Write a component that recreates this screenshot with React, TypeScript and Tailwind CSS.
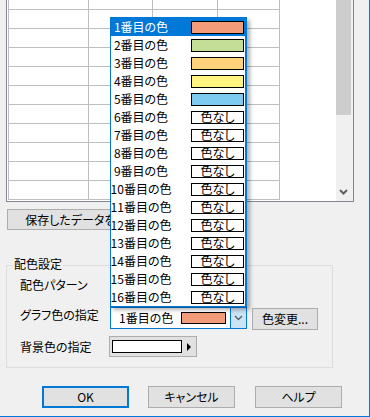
import type { ReactNode } from 'react'

const font = "font-['Noto_Sans_CJK_JP','Noto_Sans',sans-serif] [font-feature-settings:'palt']"

const swatches: (string | null)[] = [
  '#f39c79',
  '#c4dd97',
  '#fdd27b',
  '#fff47f',
  '#7ecbf1',
  null,
  null,
  null,
  null,
  null,
  null,
  null,
  null,
  null,
  null,
  null,
]

const columns = ['w-[80px]', 'w-[64px]', 'w-[65px]', 'w-[62px]']

function Chevron({ className }: { className?: string }) {
  return (
    <svg width="9" height="6" viewBox="0 0 9 6" className={className}>
      <path d="M1 1 L4.5 4.5 L8 1" fill="none" stroke="currentColor" strokeWidth="1.4" />
    </svg>
  )
}

function Swatch({ color, className }: { color: string | null; className: string }) {
  if (!color) {
    return (
      <div
        className={`${className} flex items-center justify-center whitespace-nowrap border border-black bg-white text-[12px] leading-none text-black`}
      >
        色なし
      </div>
    )
  }
  return <div className={`${className} border border-black`} style={{ backgroundColor: color }} />
}

function WinButton({ children, className }: { children: ReactNode; className: string }) {
  return (
    <div
      className={`${className} flex items-center justify-center overflow-hidden whitespace-nowrap border border-[#adadad] bg-[#e1e1e1] text-[12px] leading-none text-black`}
    >
      {children}
    </div>
  )
}

function DataGrid() {
  return (
    <div className="flex h-[202px] w-[348px] border-x border-b border-[#828790] bg-white">
      <div className="ml-[1px] h-full w-[272px] overflow-hidden">
        <div className="-mt-[9px]">
          {Array.from({ length: 11 }).map((_, row) => (
            <div key={row} className="flex h-[19px] border-b border-l border-[#bdbdbd]">
              {columns.map((w) => (
                <div key={w} className={`${w} h-full border-r border-[#bdbdbd]`} />
              ))}
            </div>
          ))}
        </div>
      </div>
      <div className="w-[56px]" />
      <div className="flex w-[17px] flex-col bg-[#f0f0f0]">
        <div className="h-[115px] w-[15px] bg-[#cdcdcd]" />
        <div className="flex flex-1 items-end justify-center pb-[6px] pr-[3px] text-[#606060]">
          <Chevron className="[&>path]:[stroke-width:2]" />
        </div>
      </div>
    </div>
  )
}

function ColorDropdown() {
  return (
    <div className="absolute left-[110px] top-[17px] w-[137px] border border-r-2 border-[#0078d7] bg-white shadow-[3px_3px_4px_rgba(0,0,0,0.3)]">
      {swatches.map((color, i) => {
        const selected = i === 0
        return (
          <div
            key={i}
            className={`flex h-[18px] items-center ${selected ? 'bg-[#0078d7] text-white' : 'text-black'}`}
          >
            <div className="flex w-[60px] justify-center whitespace-nowrap text-[12px] leading-none">
              {i + 1}番目の色
            </div>
            <Swatch color={color} className="ml-[20px] h-[13px] w-[53px]" />
          </div>
        )
      })}
    </div>
  )
}

export default function App() {
  return (
    <div
      className={`${font} relative h-[417px] w-[370px] overflow-hidden border-b border-r border-[#0078d7] bg-[#f0f0f0] text-black`}
    >
      <div className="ml-[6px]">
        <DataGrid />
      </div>

      <WinButton className="ml-[7px] mt-[7px] h-[21px] w-[172px]">保存したデータを読込む...</WinButton>

      <div className="relative ml-[6px] mt-[35px] h-[103px] w-[327px] border border-[#dcdcdc]">
        <div className="absolute -top-[8px] left-[6px] whitespace-nowrap bg-[#f0f0f0] px-[1px] text-[12px] leading-none">
          配色設定
        </div>

        <div className="whitespace-nowrap pl-[13px]">
          <div className="mt-[9px] flex h-[20px] items-center text-[12px] leading-none">配色パターン</div>

          <div className="mt-[12px] flex h-[23px]">
            <div className="flex h-[16px] w-[90px] items-center text-[12px] leading-none">グラフ色の指定</div>
            <div className="flex h-[22px] w-[137px] items-center border border-[#0078d7] bg-white">
              <div className="ml-[8px] w-[62px] text-[12px] leading-none">1番目の色</div>
              <div className="h-[12px] w-[45px] border border-black bg-[#f39c79]" />
              <div className="ml-[4px] flex h-full w-[16px] items-center justify-center border-l border-[#0078d7] bg-[#cce4f7] text-[#606060]">
                <Chevron />
              </div>
            </div>
            <WinButton className="ml-[5px] mt-[1px] h-[22px] w-[66px]">色変更...</WinButton>
          </div>

          <div className="mt-[6px] flex h-[21px]">
            <div className="flex h-[21px] w-[89px] items-center text-[12px] leading-none">背景色の指定</div>
            <div className="flex h-[21px] w-[88px] items-center border border-[#adadad] bg-[#e1e1e1]">
              <div className="ml-[2px] h-[13px] w-[70px] border border-black bg-white" />
              <svg width="4" height="8" viewBox="0 0 4 8" className="ml-[5px]">
                <path d="M0 0 L4 4 L0 8 Z" fill="#000" />
              </svg>
            </div>
          </div>
        </div>
      </div>

      <div className="ml-[42px] mt-[18px] flex gap-[19px]">
        <div className="flex h-[22px] w-[87px] items-center justify-center border-2 border-[#0078d7] bg-[#e1e1e1] text-[12px] leading-none">
          OK
        </div>
        <WinButton className="h-[22px] w-[87px]">キャンセル</WinButton>
        <WinButton className="ml-[1px] h-[22px] w-[87px]">ヘルプ</WinButton>
      </div>

      <ColorDropdown />
    </div>
  )
}
